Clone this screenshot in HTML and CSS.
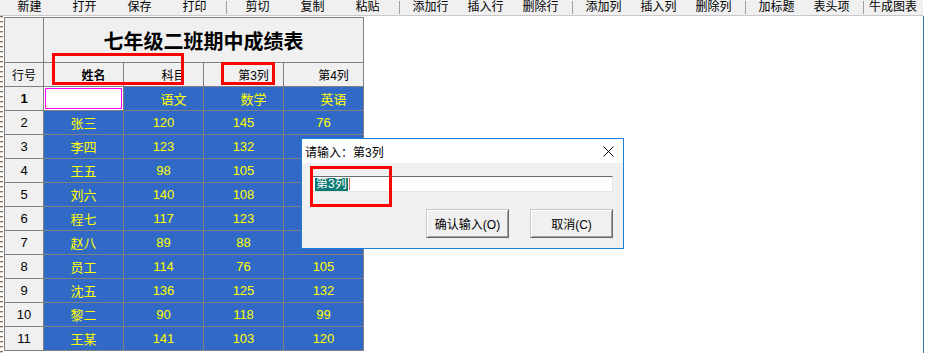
FILE: index.html
```html
<!DOCTYPE html>
<html lang="zh-CN">
<head>
    <meta charset="UTF-8">
    <meta name="viewport" content="width=device-width, initial-scale=1.0">
    <title>成绩表</title>
    <link rel="stylesheet" href="styles.css">
</head>
<body>
<div class="app">
    <div class="toolbar">
        <span class="tool">新建</span>
        <span class="tool">打开</span>
        <span class="tool">保存</span>
        <span class="tool">打印</span>
        <span class="sep"></span>
        <span class="tool">剪切</span>
        <span class="tool">复制</span>
        <span class="tool">粘贴</span>
        <span class="sep"></span>
        <span class="tool">添加行</span>
        <span class="tool">插入行</span>
        <span class="tool">删除行</span>
        <span class="sep"></span>
        <span class="tool">添加列</span>
        <span class="tool">插入列</span>
        <span class="tool">删除列</span>
        <span class="sep"></span>
        <span class="tool">加标题</span>
        <span class="tool">表头项</span>
        <span class="sep"></span>
        <span class="tool tool-wide">牛成图表</span>
    </div>

    <div class="main">
        <div class="splitter"></div>
        <div class="sheet">
            <div class="cell fixed"></div>
            <div class="cell fixed title">七年级二班期中成绩表</div>

            <div class="cell fixed small">行号</div>
            <div class="cell fixed small shift bold">姓名</div>
            <div class="cell fixed small shift">科目</div>
            <div class="cell fixed small shift">第3列</div>
            <div class="cell fixed small shift">第4列</div>

            <div class="cell fixed bold">1</div>
            <div class="cell edit"></div>
            <div class="cell data shift">语文</div>
            <div class="cell data shift">数学</div>
            <div class="cell data shift">英语</div>

            <div class="cell fixed">2</div>
            <div class="cell data">张三</div><div class="cell data">120</div><div class="cell data">145</div><div class="cell data">76</div>
            <div class="cell fixed">3</div>
            <div class="cell data">李四</div><div class="cell data">123</div><div class="cell data">132</div><div class="cell data"></div>
            <div class="cell fixed">4</div>
            <div class="cell data">王五</div><div class="cell data">98</div><div class="cell data">105</div><div class="cell data"></div>
            <div class="cell fixed">5</div>
            <div class="cell data">刘六</div><div class="cell data">140</div><div class="cell data">108</div><div class="cell data"></div>
            <div class="cell fixed">6</div>
            <div class="cell data">程七</div><div class="cell data">117</div><div class="cell data">123</div><div class="cell data"></div>
            <div class="cell fixed">7</div>
            <div class="cell data">赵八</div><div class="cell data">89</div><div class="cell data">88</div><div class="cell data"></div>
            <div class="cell fixed">8</div>
            <div class="cell data">员工</div><div class="cell data">114</div><div class="cell data">76</div><div class="cell data">105</div>
            <div class="cell fixed">9</div>
            <div class="cell data">沈五</div><div class="cell data">136</div><div class="cell data">125</div><div class="cell data">132</div>
            <div class="cell fixed">10</div>
            <div class="cell data">黎二</div><div class="cell data">90</div><div class="cell data">118</div><div class="cell data">99</div>
            <div class="cell fixed">11</div>
            <div class="cell data">王某</div><div class="cell data">141</div><div class="cell data">103</div><div class="cell data">120</div>
        </div>
    </div>

    <div class="dialog">
        <div class="dialog-title">
            <span>请输入：第3列</span>
            <svg class="close" width="11" height="11" viewBox="0 0 11 11">
                <path d="M0.5 0.5 L10.5 10.5 M10.5 0.5 L0.5 10.5" stroke="#000" stroke-width="1" fill="none"/>
            </svg>
        </div>
        <div class="dialog-body">
            <div class="input"><span class="selected">第3列</span><span class="caret"></span></div>
            <div class="dialog-actions">
                <span class="btn">确认输入(O)</span>
                <span class="btn">取消(C)</span>
            </div>
        </div>
    </div>

    <!-- annotation boxes -->
    <div class="mark mark-names"></div>
    <div class="mark mark-col3"></div>
    <div class="mark mark-input"></div>
</div>
</body>
</html>
```

FILE: styles.css
```css
body {
    margin: 0;
    background: #fff;
    font-family: "Liberation Sans", "Noto Sans CJK SC", sans-serif;
    font-size: 12px;
    color: #000;
    overflow: hidden;
}
.app {
    position: relative;
    width: 924px;
    height: 353px;
}
.toolbar {
    display: flex;
    align-items: center;
    width: 923px;
    height: 16px;
    padding-left: 2px;
    box-sizing: border-box;
    background: #f0f0f0;
    border-bottom: 1px solid #c8c8c8;
    overflow: hidden;
}
.tool {
    width: 55px;
    flex: none;
    text-align: center;
    line-height: 15px;
}
.tool-wide {
    width: 52px;
}
.sep {
    width: 8px;
    height: 13px;
    flex: none;
    display: flex;
    justify-content: center;
}
.sep::before {
    content: "";
    width: 1px;
    background: #a0a0a0;
}
.main {
    display: flex;
    width: 923px;
    height: 337px;
    border-right: 1px solid #3c74ad;
}
.splitter {
    width: 3px;
    margin-right: 1px;
    background: repeating-linear-gradient(to bottom, #8f7254 0 1px, #d8d0c8 1px 2px, transparent 2px 5px);
}
.sheet {
    align-self: flex-start;
    margin-top: 1px;
    display: grid;
    grid-template-columns: 38px repeat(4, 79px);
    grid-template-rows: 44px repeat(12, 23px);
    gap: 1px;
    padding: 1px;
    background: #808080;
}
.cell {
    display: flex;
    align-items: center;
    justify-content: center;
    font-size: 13px;
    white-space: nowrap;
}
.fixed {
    background: #f0f0f0;
    color: #000;
}
.small {
    font-size: 12px;
}
.bold {
    font-weight: bold;
}
.shift {
    padding-left: 20px;
}
.title {
    grid-column: span 4;
    font-family: "Noto Sans CJK SC", sans-serif;
    font-size: 20px;
    font-weight: bold;
}
.data {
    background: #3169c6;
    color: #ffff00;
}
.edit {
    background: #fff;
    box-shadow: inset 0 0 0 1px #fff, inset 0 0 0 2px #ff00ff;
}
.dialog {
    position: absolute;
    left: 301px;
    top: 138px;
    width: 321px;
    border: 1px solid #1c7ed6;
    background: #f0f0f0;
    z-index: 2;
}
.dialog-title {
    height: 24px;
    display: flex;
    align-items: center;
    justify-content: space-between;
    padding: 0 9px 0 3px;
    background: #fff;
    font-size: 12px;
}
.dialog-body {
    height: 85px;
    padding: 13px 10px 0 10px;
    box-sizing: border-box;
}
.input {
    height: 16px;
    display: flex;
    align-items: center;
    padding-left: 2px;
    box-sizing: border-box;
    background: #fff;
    border: 1px solid;
    border-color: #6d6d6d #e3e3e3 #e3e3e3 #6d6d6d;
}
.selected {
    background: #0b7a72;
    color: #fff;
    font-size: 12px;
    line-height: 13px;
    padding: 0 1px;
}
.caret {
    width: 1px;
    height: 12px;
    margin-left: 1px;
    background: #e0606e;
}
.dialog-actions {
    display: flex;
    justify-content: flex-end;
    gap: 21px;
    margin-top: 17px;
}
.btn {
    width: 83px;
    height: 29px;
    box-sizing: border-box;
    display: flex;
    align-items: center;
    justify-content: center;
    font-size: 12px;
    background: #f0f0f0;
    border: 1px solid;
    border-color: #c8c8c8 #696969 #696969 #c8c8c8;
    box-shadow: inset 1px 1px #fff, inset -1px -1px #a0a0a0;
}
.mark {
    position: absolute;
    border: 3px solid #ff0000;
    box-sizing: border-box;
    z-index: 3;
}
.mark-names {
    left: 52px;
    top: 53px;
    width: 132px;
    height: 32px;
}
.mark-col3 {
    left: 221px;
    top: 62px;
    width: 54px;
    height: 23px;
}
.mark-input {
    left: 310px;
    top: 166px;
    width: 82px;
    height: 41px;
}
```
